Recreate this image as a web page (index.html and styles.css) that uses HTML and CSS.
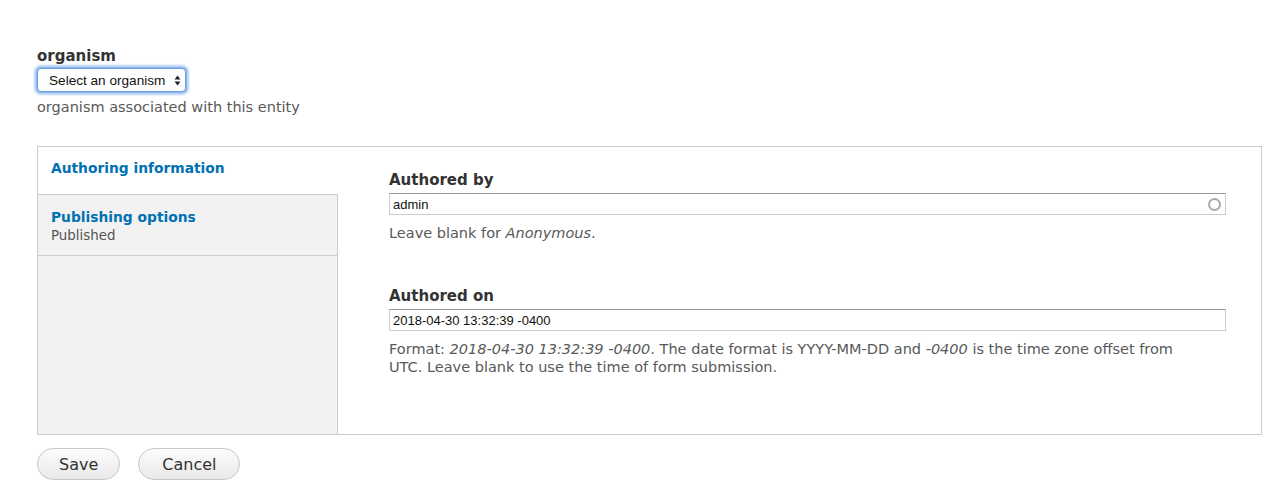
FILE: index.html
```html
<!DOCTYPE html>
<html>
<head>
<meta charset="utf-8">
<link rel="stylesheet" href="styles.css">
</head>
<body>
<div class="page">
  <div class="field organism-field">
    <label class="label">organism</label>
    <div class="select">Select an organism <span class="arrows"><svg width="7" height="11" viewBox="0 0 7 11"><path d="M3.5 0.5 L6.5 4.5 L0.5 4.5 Z M3.5 10.5 L6.5 6.5 L0.5 6.5 Z" fill="#222"/></svg></span></div>
    <div class="desc">organism associated with this entity</div>
  </div>

  <div class="vtabs">
    <ul class="tab-list">
      <li class="tab active"><a>Authoring information</a></li>
      <li class="tab"><a>Publishing options</a><span class="summary">Published</span></li>
    </ul>
    <div class="panes">
      <div class="field">
        <label class="label">Authored by</label>
        <div class="input autocomplete"><span>admin</span><span class="throbber"></span></div>
        <div class="desc">Leave blank for <em>Anonymous</em>.</div>
      </div>
      <div class="field second">
        <label class="label">Authored on</label>
        <div class="input"><span>2018-04-30 13:32:39 -0400</span></div>
        <div class="desc wrap">Format: <em>2018-04-30 13:32:39 -0400</em>. The date format is YYYY-MM-DD and <em>-0400</em> is the time zone offset from UTC. Leave blank to use the time of form submission.</div>
      </div>
    </div>
  </div>

  <div class="actions">
    <button class="btn">Save</button>
    <button class="btn cancel">Cancel</button>
  </div>
</div>
</body>
</html>
```
FILE: styles.css
```css
* { box-sizing: border-box; }
html, body { margin: 0; padding: 0; background: #fff; }
body {
  font-family: "DejaVu Sans", "Lucida Grande", Verdana, sans-serif;
  font-size: 13px;
  color: #333;
}
.page { padding: 46px 25px 0 37px; }
.label {
  display: block;
  font-weight: bold;
  font-size: 15px;
  color: #333;
  line-height: 20px;
}
.select {
  display: inline-flex;
  align-items: center;
  height: 24px;
  margin-top: 2px;
  padding: 0 4px 0 11px;
  width: 149px;
  font-family: "Liberation Sans", Arial, sans-serif;
  font-size: 13.6px;
  color: #111;
  background: #fff;
  border: 1px solid #6f9fe3;
  border-radius: 4px;
  box-shadow: 0 0 0 1px #8fb6ef, 0 0 2px 3px #b7d2f7;
  justify-content: space-between;
}
.arrows { display: flex; align-items: center; }
.desc {
  color: #595959;
  font-size: 14.5px;
  line-height: 18px;
  margin-top: 6px;
}
.desc em { font-style: italic; }
.vtabs {
  display: flex;
  margin-top: 30px;
  border: 1px solid #ccc;
  height: 289px;
}
.tab-list {
  list-style: none;
  margin: 0;
  padding: 0;
  width: 300px;
  flex: none;
  background: #f2f2f2;
  border-right: 1px solid #ccc;
}
.tab {
  border-bottom: 1px solid #ccc;
  padding: 12px 13px 11px;
}
.tab.active {
  background: #fff;
  margin-right: -1px;
  height: 48px;
}
.tab a {
  display: block;
  color: #0071b3;
  font-weight: bold;
  font-size: 13.8px;
  line-height: 18px;
}
.tab .summary {
  display: block;
  color: #555;
  font-size: 13.4px;
  line-height: 19px;
}
.tab + .tab { padding-top: 13px; padding-bottom: 10px; }
.panes {
  flex: 1;
  padding: 22px 35px 0 51px;
}
.panes .field .label { line-height: 22px; }
.input {
  display: flex;
  align-items: center;
  justify-content: space-between;
  height: 22px;
  margin-top: 2px;
  padding: 0 4px 0 3px;
  border: 1px solid #ccc;
  border-top-color: #999;
  font-family: "Liberation Sans", Arial, sans-serif;
  font-size: 13px;
  color: #111;
}
.throbber {
  width: 13px;
  height: 13px;
  border: 2px solid #aaa;
  border-radius: 50%;
}
.panes .desc { margin-top: 9px; }
.panes .field.second .desc { margin-top: 9px; }
.desc.wrap { max-width: 812px; }
.field.second { margin-top: 43px; }
.actions {
  display: flex;
  gap: 18px;
  margin-top: 13px;
}
.btn {
  font-family: "DejaVu Sans", "Lucida Grande", Verdana, sans-serif;
  font-size: 16px;
  color: #333;
  height: 32px;
  padding: 0 21px;
  border: 1px solid #c8c8c8;
  border-radius: 16px;
  background: linear-gradient(#fcfcfc, #e9e9e9);
}
.btn.cancel { padding: 0 23px; }
```
